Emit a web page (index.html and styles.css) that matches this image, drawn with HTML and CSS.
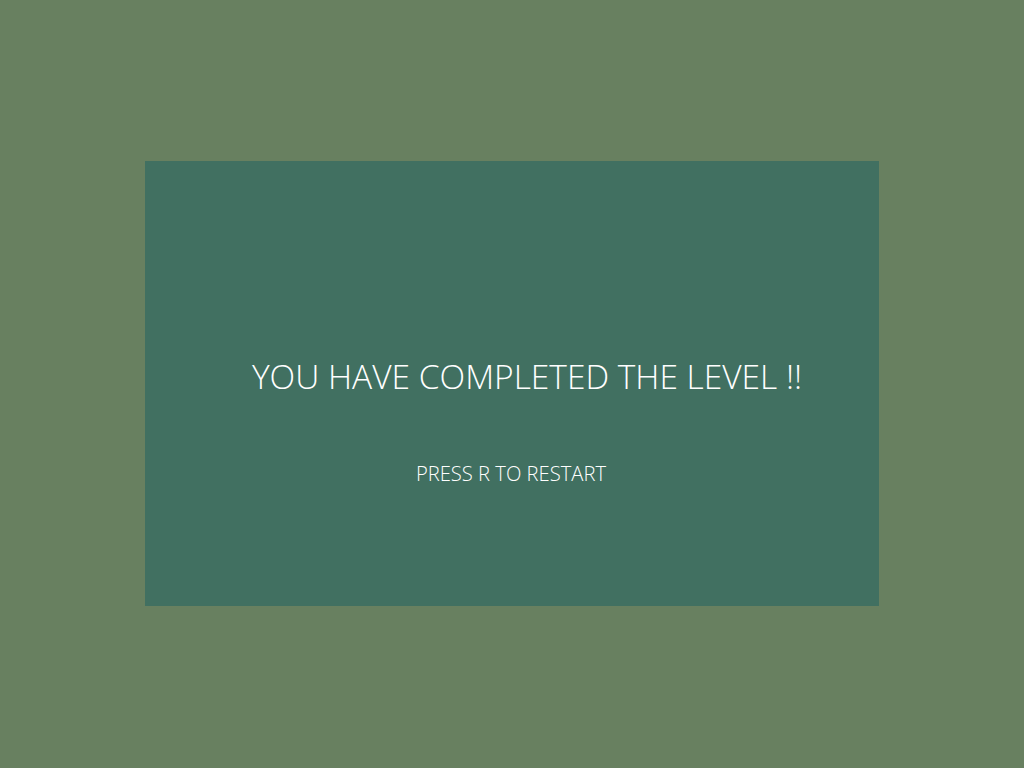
FILE: index.html
```html
<!DOCTYPE html>
<html>
<head>
<meta charset="utf-8">
<link rel="stylesheet" href="styles.css">
</head>
<body>
<div class="stage">
  <div class="panel">
    <div class="title">YOU HAVE COMPLETED THE LEVEL !!</div>
    <div class="hint">PRESS R TO RESTART</div>
  </div>
</div>
</body>
</html>
```
FILE: styles.css
```css
html, body {
  margin: 0;
  padding: 0;
  background: #688060;
  width: 1024px;
  height: 768px;
  overflow: hidden;
}
.stage {
  padding-top: 161px;
  padding-left: 145px;
}
.panel {
  width: 734px;
  height: 445px;
  background: #417061;
  display: flex;
  flex-direction: column;
  align-items: center;
  box-sizing: border-box;
  padding-top: 193px;
  color: #ffffff;
  font-family: "Open Sans", sans-serif;
  font-weight: 300;
}
.title {
  font-size: 33.5px;
  line-height: 44px;
  padding-left: 30px;
  white-space: nowrap;
}
.hint {
  font-size: 20.2px;
  line-height: 28px;
  margin-top: 61px;
  padding-right: 2px;
}
```
